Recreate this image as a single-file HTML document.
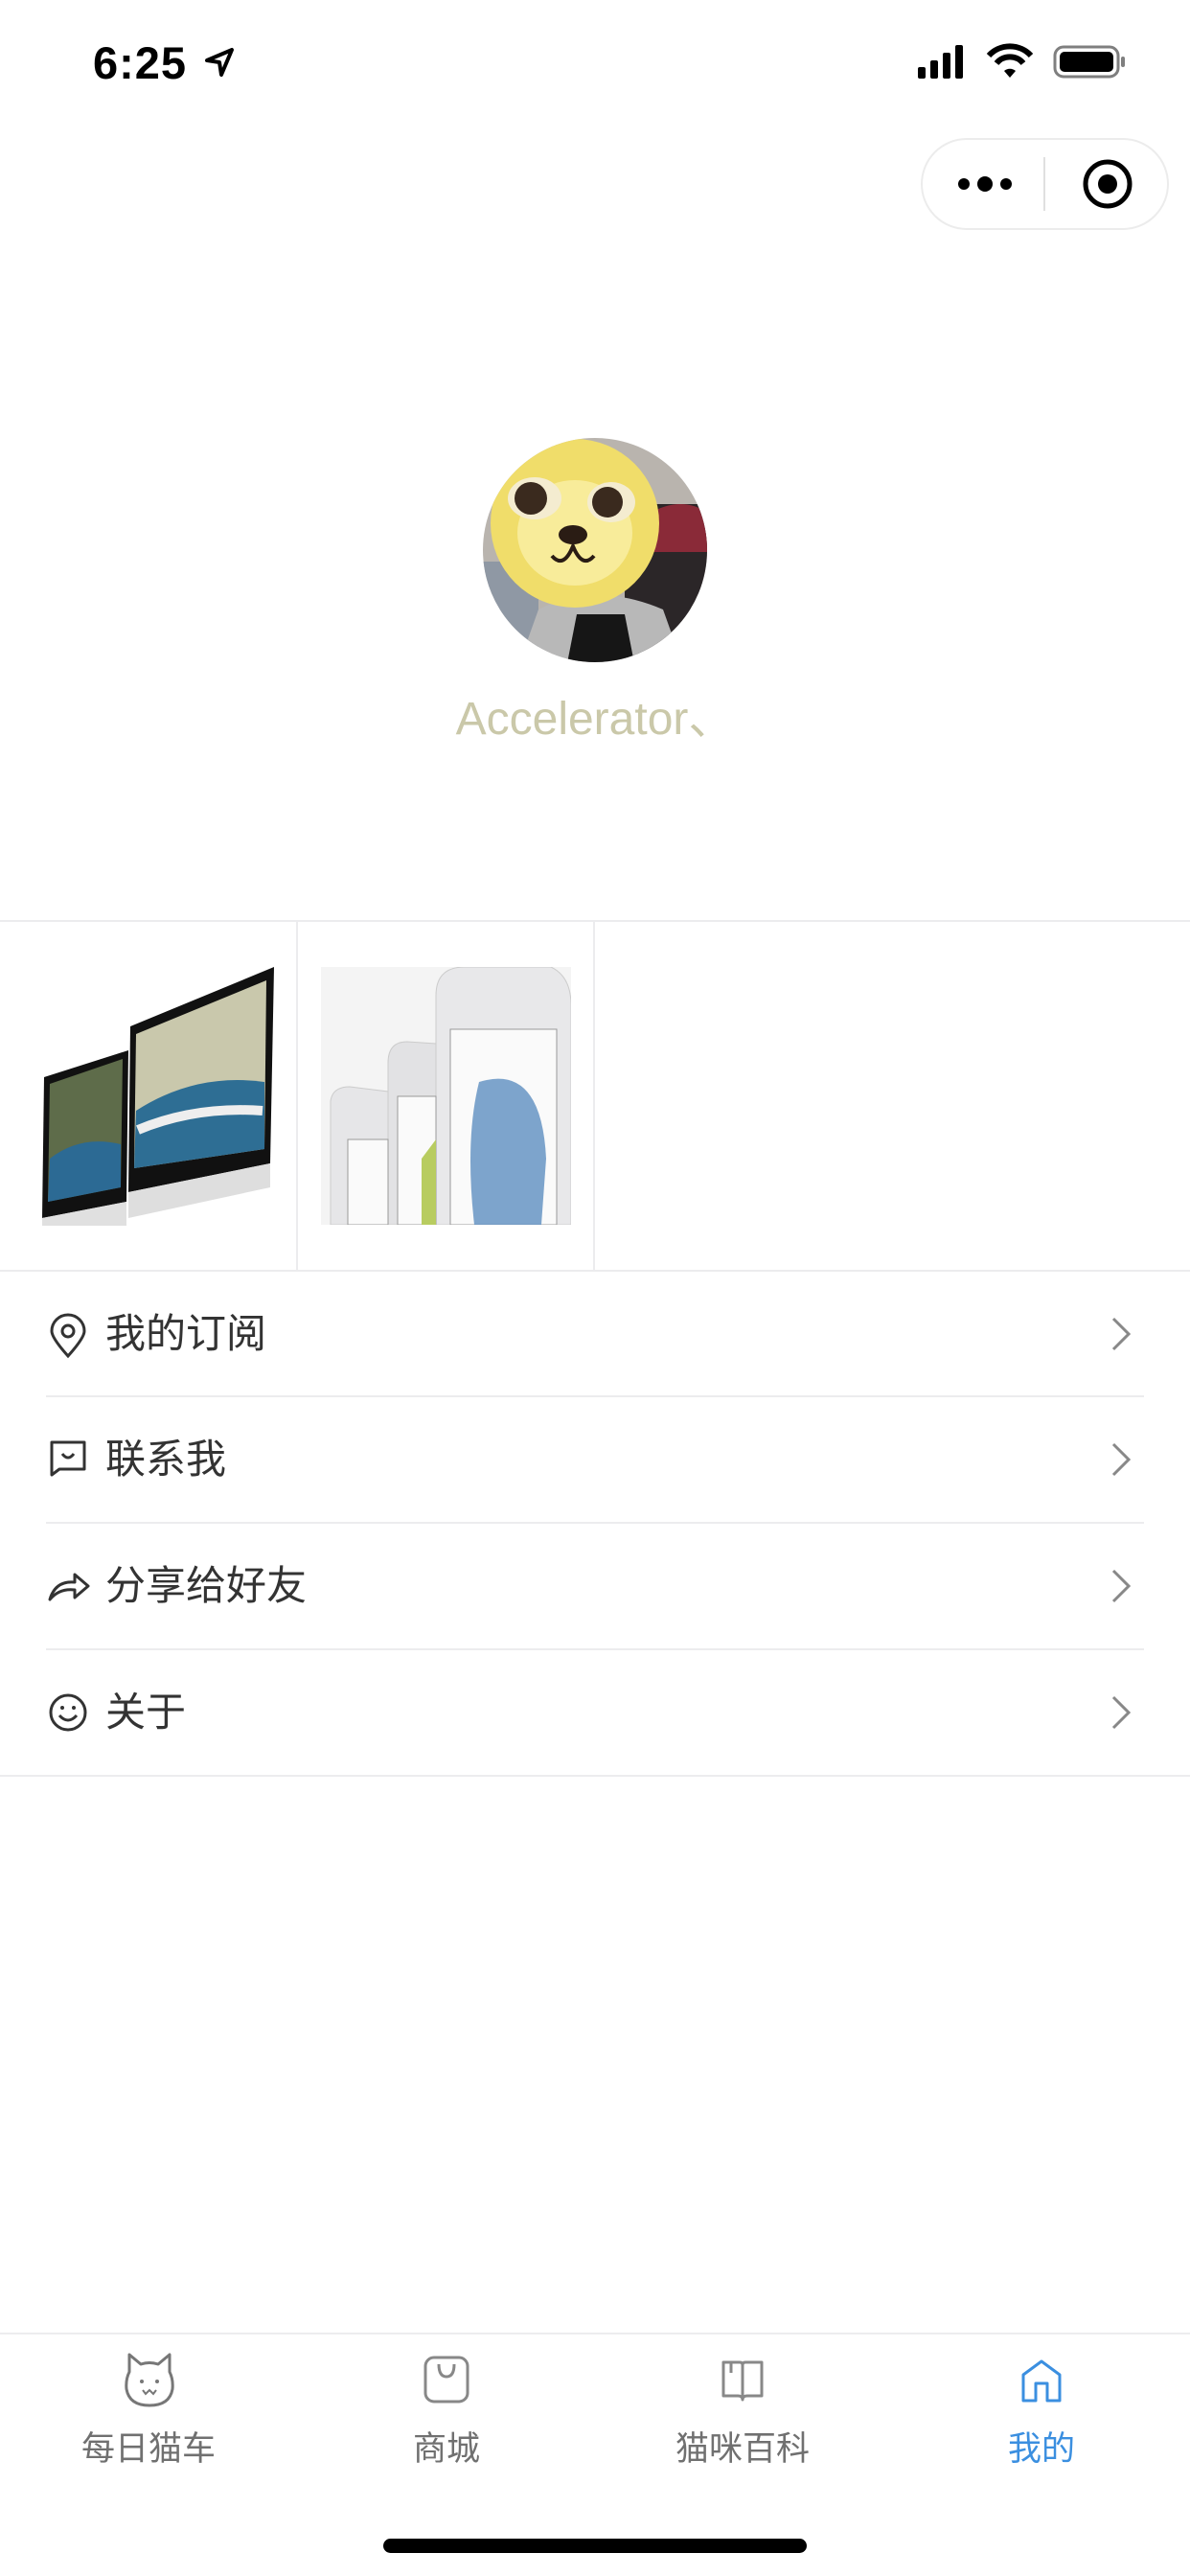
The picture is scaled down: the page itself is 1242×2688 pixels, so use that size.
<!DOCTYPE html>
<html><head><meta charset="utf-8"><style>
*{margin:0;padding:0;box-sizing:border-box}
body{width:1242px;height:2688px;background:#fff;position:relative;overflow:hidden;font-family:"Liberation Sans","Noto Sans CJK SC",sans-serif}
.abs{position:absolute}
.row{position:absolute;left:0;width:1242px;height:130px}
.row .t{position:absolute;left:110px;top:0;line-height:130px;font-size:42px;color:#333}
.row svg.ic{position:absolute;left:50px;top:43px}
.row .ch{position:absolute;left:1158px;top:46px}
.line{position:absolute;left:48px;width:1146px;height:2px;background:#ececee}
.tab{position:absolute;top:2527px;font-size:35px;color:#707070;width:240px;text-align:center}
</style></head><body>
<div class="abs" style="left:97px;top:38px;font-size:47px;font-weight:bold;color:#000;letter-spacing:1px">6:25</div>
<svg class="abs" style="left:212px;top:48px" width="34" height="34" viewBox="0 0 34 34"><path d="M4 15 L30 4 L19 30 L17 17 Z" fill="none" stroke="#000" stroke-width="4" stroke-linejoin="round"/></svg>
<svg class="abs" style="left:956px;top:44px" width="222" height="42" viewBox="0 0 222 42">
<rect x="2" y="26" width="8" height="12" rx="2"/><rect x="15" y="19" width="8" height="19" rx="2"/><rect x="28" y="11" width="8" height="27" rx="2"/><rect x="41" y="3" width="8" height="35" rx="2"/>
<path d="M76 14 A30 30 0 0 1 120 14" stroke="#000" stroke-width="6" fill="none"/><path d="M84 22 A18 18 0 0 1 112 22" stroke="#000" stroke-width="6" fill="none"/><path d="M92 30 L98 37 L104 30 A9 9 0 0 0 92 30Z"/>
<rect x="145" y="5" width="66" height="31" rx="9" fill="none" stroke="#000" stroke-width="3" opacity=".5"/><rect x="150" y="10" width="56" height="21" rx="5"/><rect x="214" y="15" width="4" height="11" rx="2" opacity=".5"/>
</svg>
<div class="abs" style="left:961px;top:144px;width:259px;height:96px;border:2px solid #ececec;border-radius:48px"></div>
<svg class="abs" style="left:996px;top:170px" width="70" height="44"><circle cx="10" cy="22" r="6"/><circle cx="32" cy="22" r="8"/><circle cx="54" cy="22" r="6"/></svg>
<div class="abs" style="left:1089px;top:164px;width:2px;height:56px;background:#e0e0e0"></div>
<svg class="abs" style="left:1128px;top:164px" width="56" height="56"><circle cx="28" cy="28" r="23" fill="none" stroke="#000" stroke-width="5"/><circle cx="28" cy="28" r="10"/></svg>

<svg class="abs" style="left:502px;top:456px" width="238" height="236" viewBox="0 0 238 236">
<defs><clipPath id="c"><circle cx="119" cy="118" r="117"/></clipPath></defs>
<g clip-path="url(#c)">
<rect width="238" height="236" fill="#b9b4ae"/>
<rect x="150" y="70" width="90" height="170" fill="#2b2628"/>
<path d="M175 80 Q210 60 238 80 L238 120 L175 120Z" fill="#8a2a38"/>
<rect x="0" y="130" width="60" height="110" fill="#8f98a4"/>
<path d="M40 236 L60 180 Q120 150 190 180 L210 236Z" fill="#b8b8b8"/>
<path d="M90 236 L100 185 L150 185 L160 236Z" fill="#161616"/>
<ellipse cx="98" cy="90" rx="88" ry="88" fill="#f0dd6a"/>
<ellipse cx="98" cy="100" rx="60" ry="55" fill="#f8ec9a"/>
<ellipse cx="56" cy="64" rx="28" ry="22" fill="#f4ecd0"/><circle cx="52" cy="64" r="17" fill="#3a2a1e"/>
<ellipse cx="136" cy="68" rx="25" ry="21" fill="#f4ecd0"/><circle cx="132" cy="68" r="16" fill="#3a2a1e"/>
<ellipse cx="96" cy="102" rx="15" ry="10" fill="#2a1c14"/>
<path d="M74 124 Q86 138 96 114 Q106 138 118 124" fill="none" stroke="#2a1c14" stroke-width="4"/>
</g></svg>
<div class="abs" style="left:0;width:1242px;top:710px;text-align:center;font-size:48px;color:#cac8a9">Accelerator、</div>

<div class="abs" style="left:0;top:960px;width:1242px;height:2px;background:#ececee"></div>
<div class="abs" style="left:309px;top:962px;width:2px;height:364px;background:#ececee"></div>
<div class="abs" style="left:619px;top:962px;width:2px;height:364px;background:#ececee"></div>
<div class="abs" style="left:0;top:1325px;width:1242px;height:2px;background:#ececee"></div>
<svg class="abs" style="left:24px;top:1009px" width="262" height="270" viewBox="0 0 262 270">
<path d="M112 62 L262 0 L258 205 L110 235Z" fill="#111"/>
<path d="M118 70 L254 14 L252 190 L116 210Z" fill="#c9c8ac"/>
<path d="M118 150 Q180 110 252 120 L252 190 L116 210Z" fill="#2e6e94"/>
<path d="M120 170 Q180 145 250 150" stroke="#eee" stroke-width="10" fill="none"/>
<path d="M110 235 L258 205 L258 230 L110 262Z" fill="#dedede"/>
<path d="M22 115 L110 87 L108 245 L20 262Z" fill="#111"/>
<path d="M28 122 L104 96 L102 230 L26 245Z" fill="#5e6c4a"/>
<path d="M28 200 Q60 175 102 185 L102 230 L26 245Z" fill="#2c6a94"/>
<path d="M20 262 L108 245 L108 270 L20 270Z" fill="#e0e0e0"/>
</svg>
<svg class="abs" style="left:335px;top:1009px" width="261" height="269" viewBox="0 0 261 269">
<rect width="261" height="269" fill="#f4f4f4"/>
<path d="M120 269 L120 30 Q120 0 150 0 L240 0 Q261 10 261 40 L261 269Z" fill="#e8e8ea" stroke="#ccc"/>
<rect x="135" y="65" width="111" height="204" fill="#fafafa" stroke="#999"/>
<path d="M165 120 Q230 100 235 200 L230 269 L160 269 Q150 180 165 120Z" fill="#5e8fc0" opacity=".8"/>
<path d="M70 269 L70 100 Q70 78 90 78 L120 80 L120 269Z" fill="#e2e2e4" stroke="#ccc"/>
<rect x="80" y="135" width="40" height="134" fill="#fafafa" stroke="#999"/>
<path d="M105 200 L120 180 L120 269 L105 269Z" fill="#b8cc60"/>
<path d="M10 269 L10 140 Q12 125 30 125 L70 130 L70 269Z" fill="#e6e6e8" stroke="#ccc"/>
<rect x="28" y="180" width="42" height="89" fill="#fafafa" stroke="#999"/>
</svg>

<!-- list -->
<div class="row" style="top:1327px"><svg class="ic" width="42" height="48" viewBox="0 0 42 48"><path d="M21 45 Q4 26 4 19 A17 17 0 0 1 38 19 Q38 26 21 45Z" fill="none" stroke="#333" stroke-width="3"/><circle cx="21" cy="19" r="6" fill="none" stroke="#333" stroke-width="3"/></svg><div class="t">我的订阅</div><svg class="ch" width="24" height="38"><path d="M4 3 L20 19 L4 35" fill="none" stroke="#888" stroke-width="3"/></svg></div>
<div class="line" style="top:1456px"></div>
<div class="row" style="top:1458px"><svg class="ic" width="42" height="44" viewBox="0 0 42 44"><path d="M4 4 H38 V32 H12 L4 38Z" fill="none" stroke="#333" stroke-width="3" stroke-linejoin="round"/><path d="M15 16 Q21 24 27 16" fill="none" stroke="#333" stroke-width="3"/></svg><div class="t">联系我</div><svg class="ch" width="24" height="38"><path d="M4 3 L20 19 L4 35" fill="none" stroke="#888" stroke-width="3"/></svg></div>
<div class="line" style="top:1588px"></div>
<div class="row" style="top:1590px"><svg class="ic" width="46" height="44" viewBox="0 0 46 44"><path d="M2 36 Q8 16 28 18 L28 10 L42 22 L28 34 L28 26 Q12 24 2 36Z" fill="none" stroke="#333" stroke-width="3" stroke-linejoin="round"/></svg><div class="t">分享给好友</div><svg class="ch" width="24" height="38"><path d="M4 3 L20 19 L4 35" fill="none" stroke="#888" stroke-width="3"/></svg></div>
<div class="line" style="top:1720px"></div>
<div class="row" style="top:1722px"><svg class="ic" width="42" height="44" viewBox="0 0 42 44"><circle cx="21" cy="22" r="18" fill="none" stroke="#333" stroke-width="3"/><circle cx="15" cy="17" r="2" fill="#333"/><circle cx="27" cy="17" r="2" fill="#333"/><path d="M12 25 Q21 35 30 25" fill="none" stroke="#333" stroke-width="3"/></svg><div class="t">关于</div><svg class="ch" width="24" height="38"><path d="M4 3 L20 19 L4 35" fill="none" stroke="#888" stroke-width="3"/></svg></div>
<div class="abs" style="left:0;top:1852px;width:1242px;height:2px;background:#ececee"></div>

<!-- tab bar -->
<div class="abs" style="left:0;top:2434px;width:1242px;height:2px;background:#ececee"></div>
<svg class="abs" style="left:127px;top:2455px" width="58" height="58" viewBox="0 0 58 58"><path d="M8 20 L8 2 L20 12 Q29 9 38 12 L50 2 L50 20 Q54 28 53 38 Q50 55 29 55 Q8 55 5 38 Q4 28 8 20Z" fill="none" stroke="#777" stroke-width="3" stroke-linejoin="round"/><circle cx="21" cy="30" r="2" fill="#777"/><circle cx="37" cy="30" r="2" fill="#777"/><path d="M22 39 L25 43 L29 39 L33 43 L36 39" fill="none" stroke="#777" stroke-width="2"/></svg>
<svg class="abs" style="left:442px;top:2458px" width="48" height="52" viewBox="0 0 48 52"><rect x="2" y="2" width="44" height="46" rx="9" fill="none" stroke="#888" stroke-width="3"/><path d="M16 9 Q16 22 24 22 Q32 22 32 9" fill="none" stroke="#888" stroke-width="3"/></svg>
<svg class="abs" style="left:752px;top:2462px" width="46" height="46" viewBox="0 0 46 46"><path d="M3 3 H20 Q23 3 23 6 V42 Q23 38 18 38 H3Z M43 3 H26 Q23 3 23 6 V42 Q23 38 28 38 H43Z" fill="none" stroke="#888" stroke-width="3" stroke-linejoin="round"/><path d="M11 3 V14" stroke="#888" stroke-width="3"/></svg>
<svg class="abs" style="left:1066px;top:2462px" width="42" height="46" viewBox="0 0 42 46"><path d="M2 43 V16 L21 2 L40 16 V43 H27 V25 H15 V43Z" fill="none" stroke="#3b8fe0" stroke-width="3" stroke-linejoin="round"/></svg>
<div class="tab" style="left:35px">每日猫车</div>
<div class="tab" style="left:346px">商城</div>
<div class="tab" style="left:655px">猫咪百科</div>
<div class="tab" style="left:967px;color:#3b8fe0">我的</div>
<div class="abs" style="left:400px;top:2649px;width:442px;height:15px;border-radius:8px;background:#000"></div>
</body></html>
